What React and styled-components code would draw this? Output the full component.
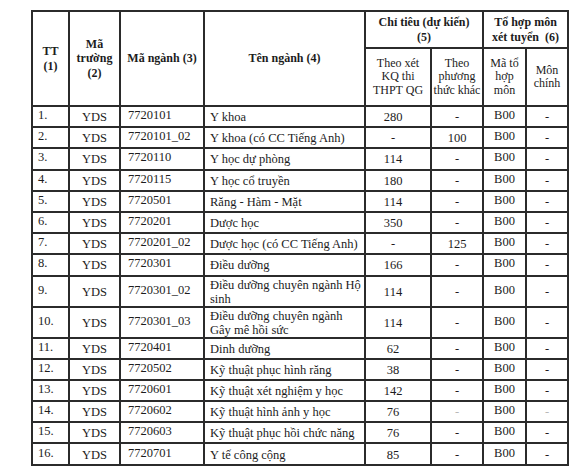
import React from 'react';
import styled, { createGlobalStyle } from 'styled-components';

const Global = createGlobalStyle`
  html, body { margin: 0; padding: 0; background: #fff; }
  body {
    font-family: "Liberation Serif", "Times New Roman", serif;
    color: #1c1c1c;
  }
`;

const LINE = '#2b2b2b';

const Page = styled.div`
  padding: 10px 0 0 31px;
`;

const Table = styled.table`
  border-collapse: collapse;
  table-layout: fixed;
  width: 536px;
  border: 2px solid ${LINE};
  font-size: 12.5px;
`;

const HeadRow = styled.tr`
  height: ${p => p.$h}px;
`;

const HeadCell = styled.th`
  border: 2px solid ${LINE};
  font-weight: ${p => (p.$sub ? 400 : 700)};
  font-size: 12px;
  text-align: center;
  vertical-align: middle;
  line-height: ${p => (p.$sub ? '13.5px' : '14.5px')};
  padding: 0 1px;
  white-space: normal;
`;

const BodyRow = styled.tr`
  height: ${p => (p.$tall ? 29 : 21.2)}px;
`;

const Cell = styled.td`
  border: 2px solid ${LINE};
  text-align: ${p => p.$align || 'center'};
  vertical-align: middle;
  padding: ${p => (p.$raise ? '0 0 3px' : '1px 0 0')};
  padding-left: ${p => p.$pl || 0}px;
  padding-right: ${p => p.$pr || 0}px;
  line-height: 14px;
  color: ${p => (p.$faint ? '#b8b8b8' : 'inherit')};
  white-space: nowrap;
  overflow: hidden;
`;

const rows = [
  ['1.', '7720101', ['Y khoa'], '280', '-'],
  ['2.', '7720101_02', ['Y khoa (có CC Tiếng Anh)'], '-', '100'],
  ['3.', '7720110', ['Y học dự phòng'], '114', '-'],
  ['4.', '7720115', ['Y học cổ truyền'], '180', '-'],
  ['5.', '7720501', ['Răng - Hàm - Mặt'], '114', '-'],
  ['6.', '7720201', ['Dược học'], '350', '-'],
  ['7.', '7720201_02', ['Dược học (có CC Tiếng Anh)'], '-', '125'],
  ['8.', '7720301', ['Điều dưỡng'], '166', '-'],
  ['9.', '7720301_02', ['Điều dưỡng chuyên ngành Hộ', 'sinh'], '114', '-'],
  ['10.', '7720301_03', ['Điều dưỡng chuyên ngành', 'Gây mê hồi sức'], '114', '-'],
  ['11.', '7720401', ['Dinh dưỡng'], '62', '-'],
  ['12.', '7720502', ['Kỹ thuật phục hình răng'], '38', '-'],
  ['13.', '7720601', ['Kỹ thuật xét nghiệm y học'], '142', '-'],
  ['14.', '7720602', ['Kỹ thuật hình ảnh y học'], '76', '-', true],
  ['15.', '7720603', ['Kỹ thuật phục hồi chức năng'], '76', '-'],
  ['16.', '7720701', ['Y tế công cộng'], '85', '-'],
];

const widths = [37, 51, 84, 161, 66, 52, 43, 42];

export default function App() {
  return (
    <>
      <Global />
      <Page>
        <Table>
          <colgroup>
            {widths.map((w, i) => (
              <col key={i} style={{ width: w }} />
            ))}
          </colgroup>
          <thead>
            <HeadRow $h={37}>
              <HeadCell rowSpan={2}>TT<br />(1)</HeadCell>
              <HeadCell rowSpan={2}>Mã<br />trường<br />(2)</HeadCell>
              <HeadCell rowSpan={2}>Mã ngành (3)</HeadCell>
              <HeadCell rowSpan={2}>Tên ngành (4)</HeadCell>
              <HeadCell colSpan={2}>Chỉ tiêu (dự kiến)<br />(5)</HeadCell>
              <HeadCell colSpan={2}>Tổ hợp môn<br />xét tuyển&nbsp; (6)</HeadCell>
            </HeadRow>
            <HeadRow $h={58}>
              <HeadCell $sub>Theo xét<br />KQ thi<br />THPT QG</HeadCell>
              <HeadCell $sub>Theo<br />phương<br />thức khác</HeadCell>
              <HeadCell $sub>Mã tổ<br />hợp<br />môn</HeadCell>
              <HeadCell $sub>Môn<br />chính</HeadCell>
            </HeadRow>
          </thead>
          <tbody>
            {rows.map(([tt, code, name, quota, other, faint]) => (
              <BodyRow key={tt} $tall={name.length > 1}>
                <Cell $align="left" $pl={5} $raise>{tt}</Cell>
                <Cell>YDS</Cell>
                <Cell $align="left" $pl={7} $raise>{code}</Cell>
                <Cell $align="left" $pl={5}>
                  {name.map((l, i) => (
                    <React.Fragment key={i}>
                      {i > 0 && <br />}
                      {l}
                    </React.Fragment>
                  ))}
                </Cell>
                <Cell $pr={10}>{quota}</Cell>
                <Cell $faint={faint}>{other}</Cell>
                <Cell $raise>B00</Cell>
                <Cell $faint={faint}>-</Cell>
              </BodyRow>
            ))}
          </tbody>
        </Table>
      </Page>
    </>
  );
}
